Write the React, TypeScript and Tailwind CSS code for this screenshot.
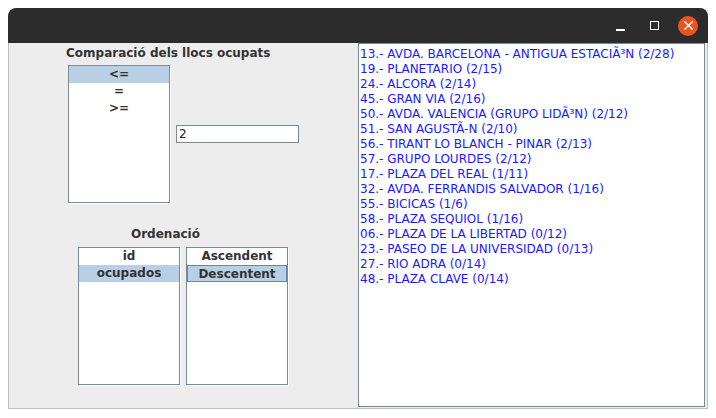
import { FC } from "react";

const stations = [
  "13.- AVDA. BARCELONA - ANTIGUA ESTACIÃ³N (2/28)",
  "19.- PLANETARIO (2/15)",
  "24.- ALCORA (2/14)",
  "45.- GRAN VIA (2/16)",
  "50.- AVDA. VALENCIA (GRUPO LIDÃ³N) (2/12)",
  "51.- SAN AGUSTÃ-N (2/10)",
  "56.- TIRANT LO BLANCH - PINAR (2/13)",
  "57.- GRUPO LOURDES (2/12)",
  "17.- PLAZA DEL REAL (1/11)",
  "32.- AVDA. FERRANDIS SALVADOR (1/16)",
  "55.- BICICAS (1/6)",
  "58.- PLAZA SEQUIOL (1/16)",
  "06.- PLAZA DE LA LIBERTAD (0/12)",
  "23.- PASEO DE LA UNIVERSIDAD (0/13)",
  "27.- RIO ADRA (0/14)",
  "48.- PLAZA CLAVE (0/14)",
];

interface ListBoxProps {
  items: string[];
  selected: number;
  focused?: boolean;
}

const ListBox: FC<ListBoxProps> = ({ items, selected, focused }) => (
  <div className="w-[102px] h-[138px] bg-white border border-[#7b8a97] shadow-[1px_1px_0_#ffffff]">
    {items.map((it, i) => (
      <div
        key={it}
        className={`h-[17px] leading-[17px] text-center font-bold text-[12px] text-[#333333] ${
          i === selected ? "bg-[#b9cfe5]" : ""
        } ${i === selected && focused ? "border border-[#6383bf] leading-[15px]" : ""}`}
      >
        {it}
      </div>
    ))}
  </div>
);

const TitleBar: FC = () => (
  <div className="h-[35px] bg-[#2c2c2c] rounded-t-[8px] flex items-center justify-end pr-[3px]">
    <div className="w-[34px] h-[20px] flex items-center justify-center">
      <div className="w-[9px] h-[2px] bg-white mt-[8px]" />
    </div>
    <div className="w-[34px] h-[20px] flex items-center justify-center">
      <div className="w-[9px] h-[9px] border-[1.5px] border-white" />
    </div>
    <div className="w-[34px] h-[20px] flex items-center justify-center">
      <div className="w-[20px] h-[20px] rounded-full bg-[#e95420] flex items-center justify-center">
        <svg viewBox="0 0 10 10" className="w-[11px] h-[11px]">
          <path d="M1.5 1.5 L8.5 8.5 M8.5 1.5 L1.5 8.5" stroke="#ffffff" strokeWidth="1.3" strokeLinecap="round" />
        </svg>
      </div>
    </div>
  </div>
);

export default function App() {
  return (
    <div
      className="w-[716px] h-[418px] bg-white pt-[8px] pl-[8px]"
      style={{ fontFamily: '"DejaVu Sans", Verdana, sans-serif' }}
    >
      <div className="w-[700px]">
        <TitleBar />
        <div className="h-[366px] bg-[#ededed] border-x border-b border-[#bdbdbd] flex">
          <div className="w-[349px] shrink-0">
            <div className="ml-[57px] mt-[2px] h-[16px] leading-[16px] font-bold text-[12px] text-[#333333]">
              Comparació dels llocs ocupats
            </div>
            <div className="flex">
              <div className="ml-[59px] mt-[4px]">
                <ListBox items={["<=", "=", ">="]} selected={0} />
              </div>
              <div className="ml-[6px] mt-[64px] w-[123px] h-[18px] bg-white border border-[#7b8a97] text-[12px] leading-[16px] pl-[2px] text-[#222222]">
                2
              </div>
            </div>
            <div className="ml-[122px] mt-[23px] h-[16px] leading-[16px] font-bold text-[12px] text-[#333333]">
              Ordenació
            </div>
            <div className="flex gap-[6px] ml-[69px] mt-[5px]">
              <ListBox items={["id", "ocupados"]} selected={1} />
              <ListBox items={["Ascendent", "Descentent"]} selected={1} focused />
            </div>
          </div>
          <div className="w-[347px] h-[364px] bg-white border border-[#7b8a97] pt-[3px] pl-[1px]">
            {stations.map((s) => (
              <div key={s} className="h-[15px] leading-[15px] text-[12px] text-[#1a1aff] whitespace-nowrap">
                {s}
              </div>
            ))}
          </div>
        </div>
      </div>
    </div>
  );
}
